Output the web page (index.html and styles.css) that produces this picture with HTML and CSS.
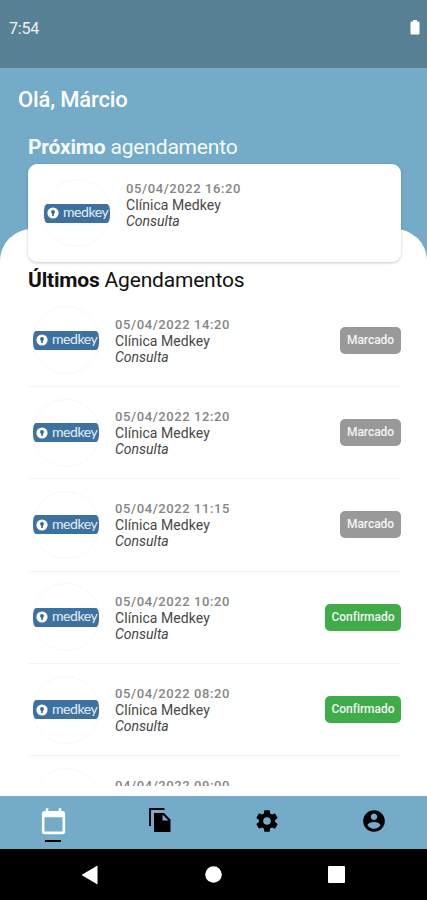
FILE: index.html
```
<!DOCTYPE html>
<html lang="pt-BR">
<head>
<meta charset="utf-8">
<title>Agendamentos</title>
<link rel="stylesheet" href="styles.css">
</head>
<body>
<svg width="0" height="0" class="defs">
  <symbol id="key" viewBox="0 0 12 12">
    <circle cx="6" cy="6" r="5.600" fill="#fff"/>
    <circle cx="6" cy="4.900" r="1.900" fill="#2f6594"/>
    <path d="M5.200 5h1.600v4h-1.600z" fill="#2f6594"/>
  </symbol>
</svg>
<div class="phone">
  <div class="status">
    <span class="clock">7:54</span>
    <svg class="battery" width="10" height="15" viewBox="0 0 10 15"><path d="M3 0H7V1.500H8.500Q9.500 1.500 9.500 2.500V13.500Q9.500 14.500 8.500 14.500H1.500Q.5 14.500 .5 13.500V2.500Q.5 1.500 1.500 1.500H3Z" fill="#fff"/></svg>
  </div>
  <header class="top">
    <div class="hello">Olá, Márcio</div>
    <h2 class="next-title"><b>Próximo</b> agendamento</h2>
  </header>
  <main class="sheet">
    <section class="card">
      <div class="logo"><div class="band"><svg width="12" height="12"><use href="#key"/></svg><span>medkey</span></div></div>
      <div class="info"><div class="date">05/04/2022 16:20</div><div class="place">Clínica Medkey</div><div class="kind">Consulta</div></div>
    </section>
    <h2 class="last-title"><b>Últimos</b> Agendamentos</h2>
    <div class="list">
      <div class="row"><div class="logo"><div class="band"><svg width="12" height="12"><use href="#key"/></svg><span>medkey</span></div></div><div class="info"><div class="date">05/04/2022 14:20</div><div class="place">Clínica Medkey</div><div class="kind">Consulta</div></div><span class="tag">Marcado</span></div>
      <div class="row"><div class="logo"><div class="band"><svg width="12" height="12"><use href="#key"/></svg><span>medkey</span></div></div><div class="info"><div class="date">05/04/2022 12:20</div><div class="place">Clínica Medkey</div><div class="kind">Consulta</div></div><span class="tag">Marcado</span></div>
      <div class="row"><div class="logo"><div class="band"><svg width="12" height="12"><use href="#key"/></svg><span>medkey</span></div></div><div class="info"><div class="date">05/04/2022 11:15</div><div class="place">Clínica Medkey</div><div class="kind">Consulta</div></div><span class="tag">Marcado</span></div>
      <div class="row"><div class="logo"><div class="band"><svg width="12" height="12"><use href="#key"/></svg><span>medkey</span></div></div><div class="info"><div class="date">05/04/2022 10:20</div><div class="place">Clínica Medkey</div><div class="kind">Consulta</div></div><span class="tag ok">Confirmado</span></div>
      <div class="row"><div class="logo"><div class="band"><svg width="12" height="12"><use href="#key"/></svg><span>medkey</span></div></div><div class="info"><div class="date">05/04/2022 08:20</div><div class="place">Clínica Medkey</div><div class="kind">Consulta</div></div><span class="tag ok">Confirmado</span></div>
      <div class="row"><div class="logo"></div><div class="info"><div class="date">04/04/2022 09:00</div></div></div>
    </div>
  </main>
  <nav class="tabs">
    <div class="tab active"><svg width="31" height="31" viewBox="0 0 24 24"><path fill="#fff" d="M19 19H5V8H19M16 1V3H8V1H6V3H5C3.890 3 3 3.890 3 5V19A2 2 0 0 0 5 21H19A2 2 0 0 0 21 19V5C21 3.890 20.100 3 19 3H18V1"/></svg></div>
    <div class="tab"><svg width="22" height="25" viewBox="0 0 22 25"><path d="M0 0H15.500V2H2V18H0Z"/><path fill-rule="evenodd" d="M5 5H15L21.500 11.500V24H5ZM13.500 6.500V12.500H19.500Z"/></svg></div>
    <div class="tab"><svg width="26" height="26" viewBox="0 0 24 24"><path d="M12 15.500A3.500 3.500 0 0 1 8.500 12 3.500 3.500 0 0 1 12 8.500 3.500 3.500 0 0 1 15.500 12 3.500 3.500 0 0 1 12 15.500M19.430 12.970C19.470 12.650 19.500 12.330 19.500 12S19.470 11.340 19.430 11L21.540 9.370C21.730 9.220 21.780 8.950 21.660 8.730L19.660 5.270C19.540 5.050 19.270 4.960 19.050 5.050L16.560 6.050C16.040 5.660 15.500 5.320 14.870 5.070L14.500 2.420C14.460 2.180 14.250 2 14 2H10C9.750 2 9.540 2.180 9.500 2.420L9.130 5.070C8.500 5.320 7.960 5.660 7.440 6.050L4.950 5.050C4.730 4.960 4.460 5.050 4.340 5.270L2.340 8.730C2.210 8.950 2.270 9.220 2.460 9.370L4.570 11C4.530 11.340 4.500 11.670 4.500 12S4.530 12.650 4.570 12.970L2.460 14.630C2.270 14.780 2.210 15.050 2.340 15.270L4.340 18.730C4.460 18.950 4.730 19.030 4.950 18.950L7.440 17.940C7.960 18.340 8.500 18.680 9.130 18.930L9.500 21.580C9.540 21.820 9.750 22 10 22H14C14.250 22 14.460 21.820 14.500 21.580L14.870 18.930C15.500 18.670 16.040 18.340 16.560 17.940L19.050 18.950C19.270 19.030 19.540 18.950 19.660 18.730L21.660 15.270C21.780 15.050 21.730 14.780 21.540 14.630Z"/></svg></div>
    <div class="tab"><svg width="26" height="26" viewBox="0 0 24 24"><path d="M12 2C6.480 2 2 6.480 2 12s4.480 10 10 10 10-4.480 10-10S17.520 2 12 2zm0 3c1.660 0 3 1.340 3 3s-1.340 3-3 3-3-1.340-3-3 1.340-3 3-3zm0 14.200c-2.500 0-4.710-1.280-6-3.220.03-1.990 4-3.080 6-3.080 1.990 0 5.970 1.090 6 3.080-1.290 1.940-3.500 3.220-6 3.220z"/></svg></div>
  </nav>
  <footer class="system">
    <svg width="17" height="20" viewBox="0 0 17 20"><path d="M.5 10 16.500 .5V19.500Z" fill="#fff"/></svg>
    <svg width="17" height="17" viewBox="0 0 17 17"><circle cx="8.500" cy="8.500" r="8.300" fill="#fff"/></svg>
    <svg width="17" height="17" viewBox="0 0 17 17"><rect width="17" height="17" rx="1" fill="#fff"/></svg>
  </footer>
</div>
</body>
</html>
```
FILE: styles.css
```
* { box-sizing: border-box; }
body { margin: 0; font-family: Roboto, sans-serif; background: #73abc9; }
svg { flex: none; }
.defs { position: absolute; }
.phone { width: 427px; height: 900px; display: flex; flex-direction: column; overflow: hidden; }
.status { height: 68px; flex: none; background: #588196; display: flex; justify-content: space-between; align-items: flex-start; padding: 20px 7px 0 9px; }
.clock { font-size: 16px; line-height: 17px; letter-spacing: -.2px; color: #edf3f7; }
.top { height: 161px; flex: none; color: #fff; padding: 19px 18px 0; }
.hello { font-size: 22px; line-height: 26px; font-weight: 500; letter-spacing: -.15px; }
h2 { margin: 0; font-size: 21px; line-height: 26px; font-weight: 400; letter-spacing: -.19px; }
.next-title { margin: 21px 0 0 10px; color: #f5fafc; }
.sheet { flex: 1; min-height: 0; background: #fff; border-radius: 32px 32px 0 0; padding: 0 26px 10px 28px; display: flex; flex-direction: column; }
.card { height: 98px; flex: none; margin-top: -65px; background: #fff; border-radius: 9px; box-shadow: 0 1px 3px rgba(0,0,0,.22); display: flex; align-items: center; padding: 0 15px; width: 373px; }
.logo { width: 68px; height: 68px; flex: none; border: 1px solid #f8f8f8; border-radius: 50%; display: flex; align-items: center; }
.band { width: 66px; height: 19px; flex: none; background: #3d719f; border-radius: 3px / 8px; display: flex; align-items: center; gap: 4px; padding-left: 3px; }
.band span { font: 400 14px/18px Lato, sans-serif; letter-spacing: -.45px; color: #e4eef7; height: 20px; }
.info { font-size: 14px; line-height: 16px; align-self: flex-start; }
.card .info { margin: 17px 0 0 15px; }
.date { color: #858585; font-size: 13px; letter-spacing: .6px; font-weight: 500; }
.place { color: #484848; letter-spacing: .06px; }
.kind { color: #444; font-style: italic; }
.last-title { color: #111; margin-top: 5px; flex: none; }
.list { flex: 1; min-height: 0; overflow: hidden; width: 373px; padding-top: 1.500px; }
.row { height: 92.400px; border-bottom: 1px solid #f4f4f4; display: flex; align-items: center; padding-left: 4px; }
.row .info { margin: 22px 0 0 15px; }
.tag { margin-left: auto; height: 27px; border-radius: 5px; background: #999; color: #f4f4f4; font-size: 12px; line-height: 27px; font-weight: 500; letter-spacing: -.05px; width: 61px; text-align: center; white-space: nowrap; }
.tag.ok { background: #40ac49; width: 76px; }
.tabs { height: 53px; flex: none; background: #73abc9; display: grid; grid-template-columns: repeat(4, 1fr); }
.tab { display: flex; flex-direction: column; align-items: center; padding-top: 12px; }
.tab.active { padding-top: 11px; }
.tab.active::after { content: ""; width: 16px; height: 2px; background: #000; margin-top: 2px; }
.system { height: 51px; flex: none; background: #000; display: flex; justify-content: space-between; align-items: center; padding: 0 82px 0 81px; }
```
